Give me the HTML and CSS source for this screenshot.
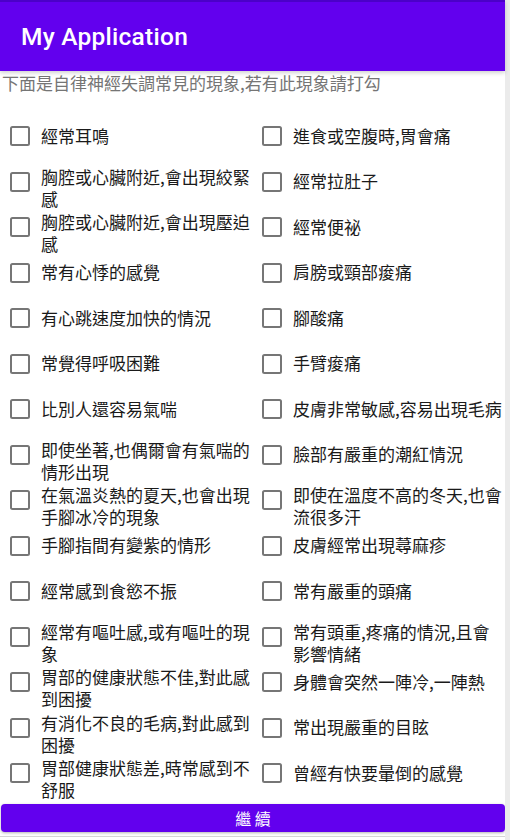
FILE: index.html
```html
<!DOCTYPE html>
<html lang="zh-Hant">
<head>
<meta charset="utf-8">
<title>My Application</title>
<link rel="stylesheet" href="styles.css">
</head>
<body>
<div class="page">
  <div class="screen">
    <header class="appbar"><h1 class="title">My Application</h1></header>
    <p class="intro">下面是自律神經失調常見的現象,若有此現象請打勾</p>
    <div class="grid">
      <label class="item"><span class="box"></span><span class="label"><span class="text">經常耳鳴</span></span></label>
      <label class="item"><span class="box"></span><span class="label"><span class="text">進食或空腹時,胃會痛</span></span></label>
      <label class="item"><span class="box"></span><span class="label"><span class="text">胸腔或心臟附近,會出現絞緊感</span></span></label>
      <label class="item"><span class="box"></span><span class="label"><span class="text">經常拉肚子</span></span></label>
      <label class="item"><span class="box"></span><span class="label"><span class="text">胸腔或心臟附近,會出現壓迫感</span></span></label>
      <label class="item"><span class="box"></span><span class="label"><span class="text">經常便祕</span></span></label>
      <label class="item"><span class="box"></span><span class="label"><span class="text">常有心悸的感覺</span></span></label>
      <label class="item"><span class="box"></span><span class="label"><span class="text">肩膀或頸部痠痛</span></span></label>
      <label class="item"><span class="box"></span><span class="label"><span class="text">有心跳速度加快的情況</span></span></label>
      <label class="item"><span class="box"></span><span class="label"><span class="text">腳酸痛</span></span></label>
      <label class="item"><span class="box"></span><span class="label"><span class="text">常覺得呼吸困難</span></span></label>
      <label class="item"><span class="box"></span><span class="label"><span class="text">手臂痠痛</span></span></label>
      <label class="item"><span class="box"></span><span class="label"><span class="text">比別人還容易氣喘</span></span></label>
      <label class="item"><span class="box"></span><span class="label"><span class="text">皮膚非常敏感,容易出現毛病</span></span></label>
      <label class="item"><span class="box"></span><span class="label"><span class="text">即使坐著,也偶爾會有氣喘的情形出現</span></span></label>
      <label class="item"><span class="box"></span><span class="label"><span class="text">臉部有嚴重的潮紅情況</span></span></label>
      <label class="item"><span class="box"></span><span class="label"><span class="text">在氣溫炎熱的夏天,也會出現手腳冰冷的現象</span></span></label>
      <label class="item"><span class="box"></span><span class="label"><span class="text">即使在溫度不高的冬天,也會流很多汗</span></span></label>
      <label class="item"><span class="box"></span><span class="label"><span class="text">手腳指間有變紫的情形</span></span></label>
      <label class="item"><span class="box"></span><span class="label"><span class="text">皮膚經常出現蕁麻疹</span></span></label>
      <label class="item"><span class="box"></span><span class="label"><span class="text">經常感到食慾不振</span></span></label>
      <label class="item"><span class="box"></span><span class="label"><span class="text">常有嚴重的頭痛</span></span></label>
      <label class="item"><span class="box"></span><span class="label"><span class="text">經常有嘔吐感,或有嘔吐的現象</span></span></label>
      <label class="item"><span class="box"></span><span class="label"><span class="text">常有頭重,疼痛的情況,且會影響情緒</span></span></label>
      <label class="item"><span class="box"></span><span class="label"><span class="text">胃部的健康狀態不佳,對此感到困擾</span></span></label>
      <label class="item"><span class="box"></span><span class="label"><span class="text">身體會突然一陣冷,一陣熱</span></span></label>
      <label class="item"><span class="box"></span><span class="label"><span class="text">有消化不良的毛病,對此感到困擾</span></span></label>
      <label class="item"><span class="box"></span><span class="label"><span class="text">常出現嚴重的目眩</span></span></label>
      <label class="item"><span class="box"></span><span class="label"><span class="text">胃部健康狀態差,時常感到不舒服</span></span></label>
      <label class="item"><span class="box"></span><span class="label"><span class="text">曾經有快要暈倒的感覺</span></span></label>
    </div>
    <button class="btn" type="button">繼 續</button>
    <div class="bottomline"></div>
  </div>
  <div class="edge"></div>
</div>
</body>
</html>
```
FILE: styles.css
```css
html, body {
  margin: 0;
  padding: 0;
  background: #ffffff;
}

.page {
  display: flex;
  width: 510px;
  height: 840px;
  overflow: hidden;
}

.screen {
  width: 505px;
  display: flex;
  flex-direction: column;
  font-family: "Noto Sans CJK TC", "Noto Sans", sans-serif;
}

.edge {
  width: 5px;
  background: #ebebeb;
}

.appbar {
  height: 69px;
  border-top: 2px solid #4b00c8;
  background: #6200ee;
  box-shadow: 0 2px 4px rgba(0, 0, 0, 0.18);
  display: flex;
  align-items: center;
  padding-left: 21px;
  position: relative;
  z-index: 1;
}

.title {
  margin: 0;
  font-family: Roboto, "Noto Sans", sans-serif;
  font-weight: 500;
  font-size: 24.5px;
  color: #ffffff;
  letter-spacing: 0.25px;
}

.intro {
  margin: 0 0 0 2px;
  height: 23px;
  line-height: 23px;
  font-size: 17px;
  color: #757575;
}

.grid {
  margin-top: 19px;
  display: grid;
  grid-template-columns: 252px 253px;
  grid-auto-rows: 45.5px;
}

.item {
  display: flex;
  align-items: center;
  padding-left: 10px;
  min-width: 0;
  height: 45.5px;
}

.box {
  flex: none;
  width: 16px;
  height: 16px;
  border: 2.4px solid #767676;
  border-radius: 2.5px;
  margin-right: 11px;
  margin-top: 1px;
}

.label {
  align-self: stretch;
  display: flex;
  flex-direction: column;
  justify-content: safe center;
  padding-top: 7px;
  padding-bottom: 7px;
  min-width: 0;
}

.text {
  flex: none;
  font-size: 17px;
  line-height: 22px;
  color: #1a1a1a;
}

.btn {
  margin: 8px 0 0 1px;
  width: 504px;
  height: 28px;
  border: none;
  border-radius: 4px;
  background: #6200ee;
  color: #ffffff;
  font-family: "Noto Sans CJK TC", "Noto Sans", sans-serif;
  font-size: 16px;
  line-height: 28px;
  padding: 0;
  box-shadow: 0 1px 3px rgba(0, 0, 0, 0.3);
}

.bottomline {
  margin-top: 4px;
  height: 1px;
  background: #d4d4d4;
}
```
